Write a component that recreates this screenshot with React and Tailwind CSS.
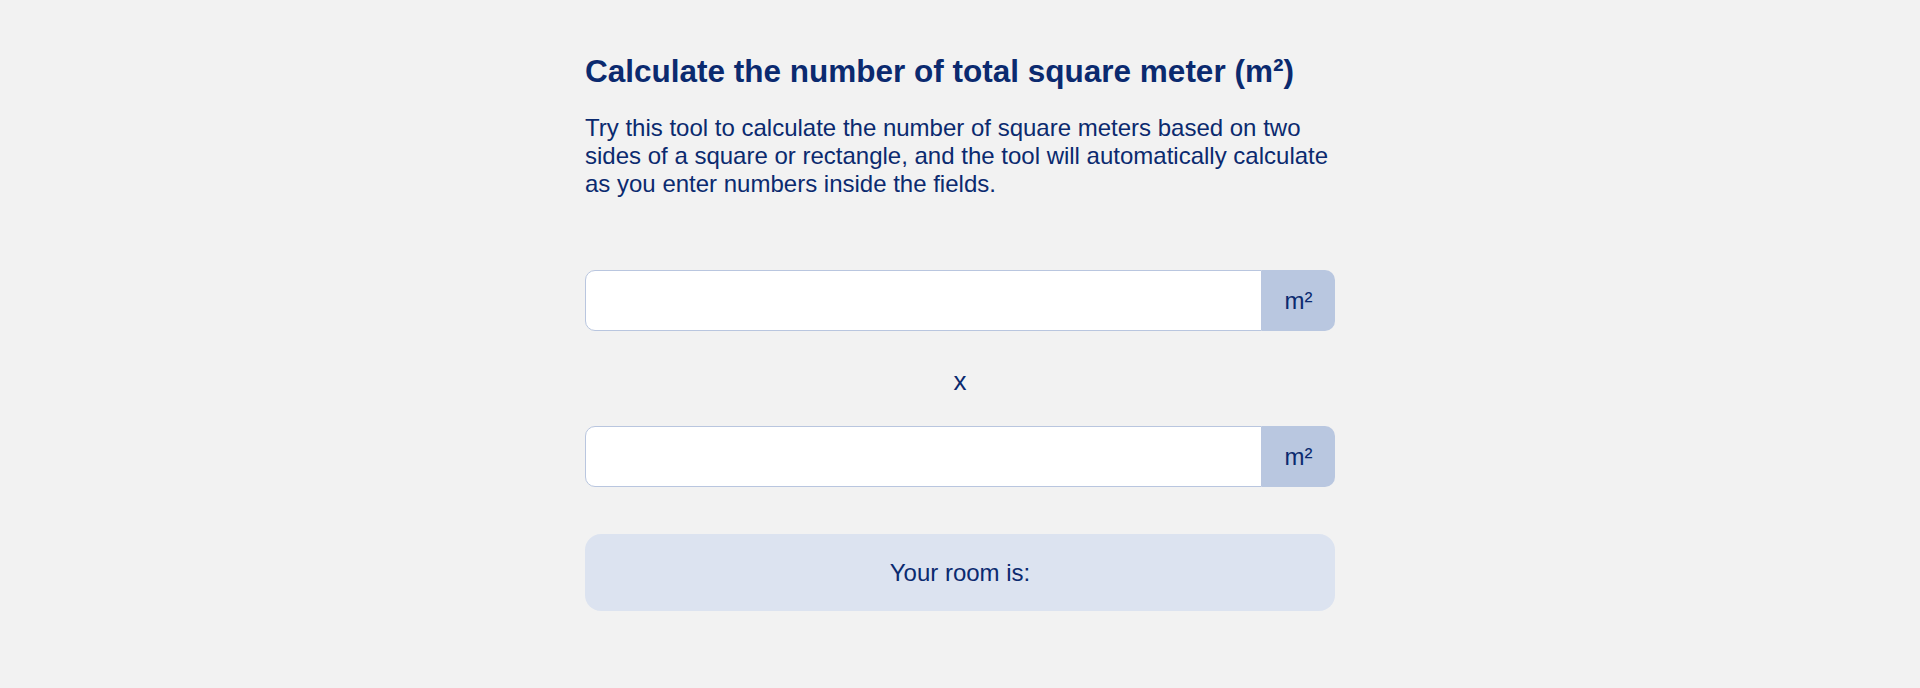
import { useState } from "react";

function SideInput({ value, onChange }) {
  return (
    <div className="flex h-[61px] w-full">
      <input
        type="number"
        value={value}
        onChange={(e) => onChange(e.target.value)}
        className="min-w-0 flex-1 rounded-l-[10px] border border-[#b9c6df] bg-white px-4 text-[24px] text-[#0b2a6f] outline-none"
      />
      <span className="flex w-[73px] shrink-0 items-center justify-center rounded-r-[10px] bg-[#b9c7e0] text-[24px] text-[#0b2a6f]">
        m²
      </span>
    </div>
  );
}

export default function App() {
  const [a, setA] = useState("");
  const [b, setB] = useState("");

  const total = a && b ? (parseFloat(a) * parseFloat(b)).toFixed(2) : "";

  return (
    <main
      className="min-h-screen bg-[#f2f2f2] text-[#0b2a6f]"
      style={{ fontFamily: "'Liberation Sans', Arial, sans-serif" }}
    >
      <div className="mx-auto w-[750px] pt-[53px]">
        <h1 className="text-[31.5px] font-bold leading-[36px]">
          Calculate the number of total square meter (m²)
        </h1>
        <p className="mt-[25px] text-[24px] leading-[28px]">
          Try this tool to calculate the number of square meters based on two sides of a square or rectangle, and the tool will automatically calculate as you enter numbers inside the fields.
        </p>

        <div className="mt-[72px] flex flex-col">
          <SideInput value={a} onChange={setA} />
          <div className="flex h-[95px] items-center justify-center pt-[5px] text-[26px]">x</div>
          <SideInput value={b} onChange={setB} />
        </div>

        <div className="mt-[47px] flex h-[77px] items-center justify-center rounded-[16px] bg-[#dce3f0] pt-[1px] text-[24px]">
          Your room is: {total && <span className="ml-2 font-bold">{total} m²</span>}
        </div>
      </div>
    </main>
  );
}
